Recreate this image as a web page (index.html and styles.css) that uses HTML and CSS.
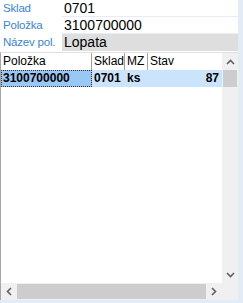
FILE: index.html
```html
<!DOCTYPE html>
<html lang="cs">
<head>
  <meta charset="UTF-8" />
  <title>Položka</title>
  <link rel="stylesheet" href="styles.css">
</head>
<body>
  <div class="window">
    <div class="form">
      <div class="label">Sklad</div><div class="value">0701</div>
      <div class="label">Položka</div><div class="value">3100700000</div>
      <div class="label">Název pol.</div><div class="value readonly">Lopata</div>
    </div>
    <div class="grid-box">
      <div class="grid-main">
        <div class="grid-data">
          <div class="row head">
            <div class="cell c1">Položka</div>
            <div class="cell c2">Sklad</div>
            <div class="cell c3">MZ</div>
            <div class="cell c4">Stav</div>
          </div>
          <div class="row selected">
            <div class="cell c1 focus">3100700000</div>
            <div class="cell c2">0701</div>
            <div class="cell c3">ks</div>
            <div class="cell c4 num">87</div>
          </div>
        </div>
        <div class="vscroll">
          <div class="arrow">
            <svg width="9" height="6" viewBox="0 0 9 6"><path d="M1 5 L4.5 1.5 L8 5" fill="none" stroke="#606060" stroke-width="1.6"/></svg>
          </div>
          <div class="vthumb"></div>
          <div class="track"></div>
          <div class="arrow">
            <svg width="9" height="6" viewBox="0 0 9 6"><path d="M1 1 L4.5 4.5 L8 1" fill="none" stroke="#606060" stroke-width="1.6"/></svg>
          </div>
        </div>
      </div>
      <div class="hbar">
        <div class="hscroll">
          <div class="arrow">
            <svg width="6" height="9" viewBox="0 0 6 9"><path d="M5 1 L1.5 4.5 L5 8" fill="none" stroke="#606060" stroke-width="1.6"/></svg>
          </div>
          <div class="hthumb"></div>
          <div class="arrow">
            <svg width="6" height="9" viewBox="0 0 6 9"><path d="M1 1 L4.5 4.5 L1 8" fill="none" stroke="#606060" stroke-width="1.6"/></svg>
          </div>
        </div>
        <div class="corner"></div>
      </div>
    </div>
  </div>
</body>
</html>
```

FILE: styles.css
```css
body {
  margin: 0;
  background: #e3ebf7;
  font-family: 'Liberation Sans', Arial, sans-serif;
  color: #000;
}
.window {
  width: 238px;
  height: 300px;
  background: #fff;
  display: flex;
  flex-direction: column;
}
.form {
  display: grid;
  grid-template-columns: 62px 1fr;
  grid-auto-rows: 17px;
}
.label {
  font-size: 11.5px;
  letter-spacing: -0.2px;
  color: #3a84d4;
  padding-left: 3px;
  line-height: 17px;
  white-space: nowrap;
}
.value {
  font-size: 14px;
  line-height: 16px;
  padding-left: 2px;
  border-bottom: 1px solid #e6edf8;
}
.value.readonly {
  background: #dedede;
  border-bottom: none;
}
.grid-box {
  flex: 1;
  display: flex;
  flex-direction: column;
  border-top: 1px solid #e0e0e0;
  border-left: 1px solid #a8a8a8;
  margin-top: 1px;
}
.grid-main {
  flex: 1;
  display: flex;
}
.grid-data {
  flex: 1;
}
.row {
  display: flex;
  height: 17px;
  font-size: 12px;
  line-height: 17px;
}
.cell {
  padding-left: 2px;
  box-sizing: border-box;
  white-space: nowrap;
}
.head .cell {
  border-right: 1px solid #a0a0a0;
}
.head .c4 {
  border-right: none;
}
.c1 { width: 91px; }
.c2 { width: 33px; }
.c3 { width: 23px; }
.c4 { flex: 1; }
.selected {
  background: #cce4fb;
  font-weight: bold;
}
.selected .c1 {
  background: #99c8f5;
  outline: 1px dotted #333;
  outline-offset: -1px;
}
.num {
  text-align: right;
  padding-right: 3px;
}
.vscroll {
  width: 16px;
  background: #f0f0f0;
  display: flex;
  flex-direction: column;
}
.arrow {
  width: 16px;
  height: 17px;
  display: flex;
  align-items: center;
  justify-content: center;
  flex-shrink: 0;
}
.vthumb {
  height: 17px;
  margin: 0 1px;
  background: #cdcdcd;
}
.track {
  flex: 1;
}
.hbar {
  height: 17px;
  display: flex;
}
.hscroll {
  flex: 1;
  display: flex;
  background: #f0f0f0;
}
.hthumb {
  flex: 1;
  margin: 1px 0;
  background: #cdcdcd;
}
.corner {
  width: 16px;
  background: #f0f0f0;
}
```
